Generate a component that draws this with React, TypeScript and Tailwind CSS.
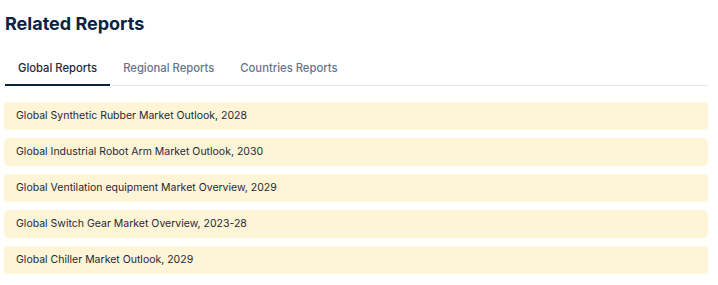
import { useState } from "react";

const tabs = ["Global Reports", "Regional Reports", "Countries Reports"];

const reports = [
  "Global Synthetic Rubber Market Outlook, 2028",
  "Global Industrial Robot Arm Market Outlook, 2030",
  "Global Ventilation equipment Market Overview, 2029",
  "Global Switch Gear Market Overview, 2023-28",
  "Global Chiller Market Outlook, 2029",
];

export default function App() {
  const [active, setActive] = useState(0);

  return (
    <div className="w-[718px] h-[285px] bg-white font-['Inter','Liberation_Sans',sans-serif] pl-[4px] pr-[10px] pt-[12px]">
      <h2 className="pl-[1px] text-[18px] leading-[24px] font-bold text-[#0b2343]">
        Related Reports
      </h2>
      <div className="mt-[25px] flex border-b border-[#e5e7eb] ml-[1px]">
        {tabs.map((tab, i) => (
          <button
            key={tab}
            onClick={() => setActive(i)}
            className={
              "px-[13px] pb-[8px] pt-0 text-[11.25px] leading-[15px] font-medium -mb-px border-b-2 " +
              (active === i
                ? "text-[#1e293b] border-[#0b2343]"
                : "text-[#64748b] border-transparent")
            }
          >
            {tab}
          </button>
        ))}
      </div>
      <div className="mt-[16px] flex flex-col gap-[8px]">
        {reports.map((r) => (
          <div
            key={r}
            className="h-[28px] flex items-center rounded-[5px] bg-[#fef4d6] pl-[12px] text-[10.5px] text-[#1f2937]"
          >
            {r}
          </div>
        ))}
      </div>
    </div>
  );
}
